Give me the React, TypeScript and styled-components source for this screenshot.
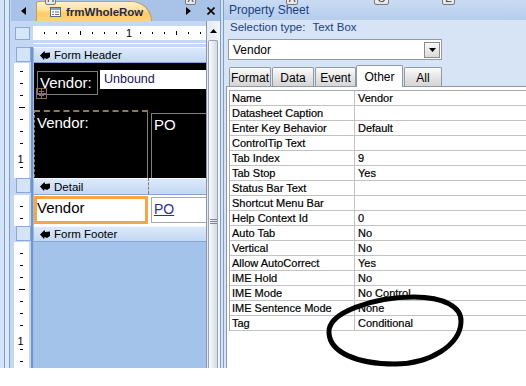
import React from 'react';
import styled, { createGlobalStyle, css } from 'styled-components';

const GlobalStyle = createGlobalStyle`
  html, body { margin: 0; padding: 0; background: #ffffff; }
  body { font-family: "Liberation Sans", Arial, sans-serif; }
  * { box-sizing: border-box; }
`;

const Screen = styled.div`
  position: relative;
  display: flex;
  align-items: flex-start;
  width: 526px;
  height: 386px;
  overflow: hidden;
  background: #ffffff;
`;

/* ---------- form designer ---------- */

const Designer = styled.div`
  display: grid;
  grid-template-columns: 11px 22px 173px 14px;
  grid-template-rows: 21px 26px 16px 115px 17px 31px 16px 1fr;
  flex: none;
  width: 220px;
  height: 368px;
  background: #c4d8f3;
`;

const NavStrip = styled.div`
  grid-column: 1;
  grid-row: 1 / -1;
  background: linear-gradient(
    to right,
    #d3e3f8 0 4px,
    #7d9fd2 4px 5px,
    #dde9fa 5px 9px,
    #7d9fd2 9px 10px,
    #c4d8f3 10px
  );
`;

const TabRow = styled.div`
  grid-column: 2 / 5;
  grid-row: 1;
  display: flex;
  align-items: stretch;
  padding-left: 8px;
  background: #a8c3e7;
`;

const NavButton = styled.div<{ $w: number; $mr?: number }>`
  display: flex;
  align-items: center;
  justify-content: center;
  width: ${p => p.$w}px;
  margin-right: ${p => p.$mr ?? 0}px;
  flex: none;
`;

const DocTab = styled.div`
  display: flex;
  align-items: center;
  gap: 5px;
  width: 116px;
  margin: 1px 0 0 9px;
  padding-left: 13px;
  background: linear-gradient(#fff4cc, #ffe19a 40%, #ffcb66 60%, #ffd47e);
  border: 1px solid #c89c55;
  border-bottom: none;
  border-radius: 3px 22px 0 0 / 3px 21px 0 0;
  font-size: 11.5px;
  font-weight: bold;
  color: #1d2c4a;
`;

const Spacer = styled.div`
  flex: 1;
`;

const CornerCell = styled.div`
  grid-column: 2;
  grid-row: 2;
  padding: 6px 0 0 4px;
`;

const CornerBox = styled.div`
  width: 15px;
  height: 13px;
  background: #d8e6f9;
  border: 1px solid #8aa9d5;
`;

const HRulerCell = styled.div`
  grid-column: 3;
  grid-row: 2;
  padding-top: 5px;
  background: linear-gradient(to bottom, transparent 22px, #ffffff 22px 23px, transparent 23px);
`;

const HRuler = styled.div`
  display: flex;
  height: 14px;
  background: #ffffff;
  overflow: hidden;
`;

const HSlot = styled.div`
  display: flex;
  flex: none;
  justify-content: flex-end;
  align-items: center;
  width: 12px;
`;

const HMark = styled.div<{ $long?: boolean }>`
  width: 1px;
  height: ${p => (p.$long ? 4 : 2)}px;
  background: #000;
`;

const RulerDigit = styled.span<{ $dir: 'h' | 'v' }>`
  font-size: 11px;
  line-height: 10px;
  color: #000;
  ${p => (p.$dir === 'h' ? 'margin-right: -3px;' : 'margin-bottom: -8px; margin-right: 2px;')}
`;

const RulerCol = styled.div<{ $row: number }>`
  grid-column: 2;
  grid-row: ${p => p.$row};
  display: flex;
  padding-left: 3px;
  background: #c4d8f3;
  border-right: 2px solid #6f95cd;
  overflow: hidden;
`;

const VRuler = styled.div`
  width: 15px;
  background: #ffffff;
  overflow: hidden;
`;

const VTrack = styled.div<{ $shift: number }>`
  display: flex;
  flex-direction: column;
  margin-top: ${p => p.$shift}px;
`;

const VSlot = styled.div`
  display: flex;
  flex: none;
  align-items: flex-end;
  justify-content: center;
  height: 12px;
`;

const VMark = styled.div<{ $long?: boolean }>`
  width: ${p => (p.$long ? 6 : 3)}px;
  height: 1px;
  background: #000;
`;

const BandSelector = styled.div`
  width: 15px;
  height: 15px;
  margin-left: 2px;
  background: #d3e3f8;
  border: 1px solid #8aa9d5;
`;

const Band = styled.div<{ $row: number }>`
  grid-column: 3;
  grid-row: ${p => p.$row};
  position: relative;
  display: flex;
  align-items: center;
  gap: 4px;
  padding-left: 6px;
  background: linear-gradient(#dce9fb, #c3d8f4);
  border-left: 1px solid #9dbbe6;
  border-top: 1px solid #f3f8ff;
  border-bottom: 1px solid #86a6d6;
  font-size: 11.5px;
  color: #000;
`;

const SelectionTail = styled.div`
  position: absolute;
  left: 114px;
  top: -1px;
  bottom: 0;
  border-left: 1px dashed #8b7b5c;
`;

const Section = styled.div<{ $row: number; $bg: string }>`
  grid-column: 3;
  grid-row: ${p => p.$row};
  position: relative;
  background: ${p => p.$bg};
  border-left: 1px solid #9dbbe6;
  overflow: hidden;
`;

type Box = { $x: number; $y: number; $w: number; $h: number };

const at = css<Box>`
  position: absolute;
  left: ${p => p.$x}px;
  top: ${p => p.$y}px;
  width: ${p => p.$w}px;
  height: ${p => p.$h}px;
`;

const LabelBox = styled.div<Box & { $dashed?: boolean }>`
  ${at};
  padding: 2px 0 0 2px;
  border: 1px solid #7f7f7f;
  ${p => p.$dashed && 'border-top: 2px dashed #8b7b5c; border-left: 1px dashed #8b7b5c;'}
  color: #ffffff;
  font-size: 15px;
  line-height: 18px;
`;

const UnboundBox = styled.div<Box>`
  ${at};
  padding: 2px 0 0 4px;
  background: #ffffff;
  color: #14145a;
  font-size: 12.5px;
  line-height: 15px;
`;

const MoveHandle = styled.div<Box>`
  ${at};
  display: flex;
  align-items: center;
  justify-content: center;
  border: 1px solid #8c6d3f;
`;

const FieldBox = styled.div<Box & { $selected?: boolean }>`
  ${at};
  background: #ffffff;
  border: ${p => (p.$selected ? '3px solid #f8a63f' : '1px solid #a8a8a8')};
  padding: ${p => (p.$selected ? '0 0 0 0' : '2px 0 0 2px')};
  font-size: 15px;
  line-height: 18px;
  color: #000;
`;

const LinkText = styled.span`
  color: #2f2f9c;
  font-size: 14px;
  text-decoration: underline;
`;

const ScrollCol = styled.div`
  grid-column: 4;
  grid-row: 2 / -1;
  display: flex;
  flex-direction: column;
  padding: 1px 2px 0 1px;
  background: linear-gradient(to right, #e6ebf2, #f3f5f8);
  border-left: 1px solid #8c96a4;
`;

const UpButton = styled.div`
  display: flex;
  align-items: center;
  justify-content: center;
  height: 18px;
`;

const Thumb = styled.div`
  flex: 1;
  display: flex;
  justify-content: center;
  padding-top: 178px;
  border: 1px solid #98a4b6;
  border-bottom: none;
  border-radius: 2px 2px 0 0;
  background: linear-gradient(to right, #fbfcfd, #e2e7ee 60%, #d3dae4);
`;

const Grip = styled.div`
  width: 7px;
  height: 6px;
  background: repeating-linear-gradient(to bottom, #7d8797 0 1px, transparent 1px 2px);
`;

/* ---------- property sheet ---------- */

const Sheet = styled.div`
  position: relative;
  display: flex;
  flex-direction: column;
  flex: none;
  width: 306px;
  height: 368px;
  background: #d6e4f6;
  border-left: 4px double #7c9dd0;
`;

const TitleBar = styled.div`
  display: flex;
  align-items: center;
  height: 20px;
  padding-left: 5px;
  background: linear-gradient(#c9dcf4, #b5ccec);
  color: #1b3f82;
  font-size: 12px;
`;

const SelectionLine = styled.div`
  display: flex;
  align-items: center;
  gap: 7px;
  height: 14px;
  padding-left: 6px;
  color: #1b3f82;
  font-size: 11.5px;
`;

const Combo = styled.div`
  display: flex;
  align-items: center;
  width: 214px;
  height: 21px;
  margin: 5px 0 0 4px;
  padding: 0 1px 0 4px;
  background: #ffffff;
  border: 1px solid #8f9aab;
  font-size: 12px;
  color: #000;
`;

const ComboButton = styled.div`
  display: flex;
  align-items: center;
  justify-content: center;
  width: 16px;
  height: 16px;
  margin-left: auto;
  background: linear-gradient(#f8f8f8, #dadada);
  border: 1px solid #8a8a8a;
`;

const TabStrip = styled.div`
  display: flex;
  align-items: flex-end;
  gap: 1px;
  height: 22px;
  margin-top: 4px;
  padding-left: 5px;
`;

const SheetTab = styled.div<{ $w: number; $active?: boolean }>`
  display: flex;
  align-items: center;
  justify-content: center;
  width: ${p => p.$w}px;
  height: ${p => (p.$active ? 22 : 19)}px;
  padding-top: ${p => (p.$active ? 0 : 2)}px;
  margin-left: ${p => (p.$active ? -1 : 0)}px;
  margin-bottom: ${p => (p.$active ? -1 : 0)}px;
  position: relative;
  background: ${p => (p.$active ? '#ffffff' : 'linear-gradient(#fbfbfb, #e6e6e6 50%, #d5d5d5)')};
  border: 1px solid #8f9aa8;
  border-bottom: none;
  border-radius: 2px 2px 0 0;
  font-size: 12px;
  color: #000;
`;

const Panel = styled.div`
  flex: 1;
  margin-left: 2px;
  padding: 3px 0 0 2px;
  background: #ffffff;
  border-top: 1px solid #8f9aa8;
  border-left: 1px solid #8f9aa8;
`;

const PropTable = styled.div`
  border-top: 1px solid #a9a9a9;
  border-left: 1px solid #a9a9a9;
`;

const PropRow = styled.div`
  display: grid;
  grid-template-columns: 125px 1fr;
  height: 15px;
  border-bottom: 1px solid #c3c3c3;
  font-size: 11px;
  line-height: 14px;
  color: #000;
  -webkit-text-stroke: 0.2px #000;
`;

const PropName = styled.div`
  padding-left: 2px;
  border-right: 1px solid #c3c3c3;
  white-space: nowrap;
  overflow: hidden;
`;

const PropValue = styled.div`
  padding-left: 3px;
  white-space: nowrap;
`;

/* ---------- overlays ---------- */

const KeyTip = styled.div<{ $x: number; $w: number }>`
  position: absolute;
  left: ${p => p.$x}px;
  top: -7px;
  width: ${p => p.$w}px;
  height: 12px;
  background: linear-gradient(#ffffff, #e4e4e4);
  border: 1px solid #7a7a7a;
  border-radius: 0 0 2px 2px;
  font-size: 10px;
  line-height: 10px;
  text-align: center;
  color: #333;
`;

const Scribble = styled.svg`
  position: absolute;
  left: 0;
  top: 0;
  pointer-events: none;
`;

const props: [string, string][] = [
  ['Name', 'Vendor'],
  ['Datasheet Caption', ''],
  ['Enter Key Behavior', 'Default'],
  ['ControlTip Text', ''],
  ['Tab Index', '9'],
  ['Tab Stop', 'Yes'],
  ['Status Bar Text', ''],
  ['Shortcut Menu Bar', ''],
  ['Help Context Id', '0'],
  ['Auto Tab', 'No'],
  ['Vertical', 'No'],
  ['Allow AutoCorrect', 'Yes'],
  ['IME Hold', 'No'],
  ['IME Mode', 'No Control'],
  ['IME Sentence Mode', 'None'],
  ['Tag', 'Conditional'],
];

const tabs = [
  { label: 'Format', w: 42 },
  { label: 'Data', w: 42 },
  { label: 'Event', w: 41 },
  { label: 'Other', w: 47, active: true },
  { label: 'All', w: 38 },
];

const Triangle = ({ dir }: { dir: 'left' | 'right' | 'up' | 'down' }) => {
  const pts = {
    left: '5,0 5,8 0,4',
    right: '0,0 0,8 5,4',
    up: '0,4 7,4 3.5,0',
    down: '0,0 7,0 3.5,4',
  }[dir];
  const w = dir === 'left' || dir === 'right' ? 5 : 7;
  const h = dir === 'left' || dir === 'right' ? 8 : 4;
  return (
    <svg width={w} height={h} viewBox={`0 0 ${w} ${h}`}>
      <polygon points={pts} fill="#000" />
    </svg>
  );
};

const FormIcon = () => (
  <svg width="11" height="10" viewBox="0 0 11 10">
    <rect x="0.5" y="0.5" width="10" height="9" fill="#fff" stroke="#5b6d86" />
    <rect x="1" y="1" width="9" height="2" fill="#8ca2c4" />
    <line x1="2" y1="5" x2="4" y2="5" stroke="#5b6d86" />
    <line x1="5" y1="5" x2="9" y2="5" stroke="#5b6d86" />
    <line x1="2" y1="7.5" x2="4" y2="7.5" stroke="#5b6d86" />
    <line x1="5" y1="7.5" x2="9" y2="7.5" stroke="#5b6d86" />
  </svg>
);

const SectionGlyph = () => (
  <svg width="10" height="9" viewBox="0 0 10 9">
    <path d="M0 4.5 L4.5 0 L5 2 L10 1.5 L10 6 L7 8 L4.5 7 L4 9 Z" fill="#000" />
  </svg>
);

const MoveGlyph = () => (
  <svg width="9" height="9" viewBox="0 0 9 9">
    <path d="M4.5 0 V9 M0 4.5 H9 M2 2.5 H7 M2 6.5 H7" stroke="#8c6d3f" strokeWidth="1" fill="none" />
  </svg>
);

const HorizontalRuler = () => (
  <HRuler>
    {Array.from({ length: 15 }, (_, i) => {
      const n = i + 1;
      return (
        <HSlot key={n}>
          {n % 8 === 0 ? <RulerDigit $dir="h">1</RulerDigit> : <HMark $long={n % 4 === 0} />}
        </HSlot>
      );
    })}
  </HRuler>
);

const VerticalRuler = ({ row, count, shift = 0 }: { row: number; count: number; shift?: number }) => (
  <RulerCol $row={row}>
    <VRuler>
      <VTrack $shift={shift}>
        {Array.from({ length: count }, (_, i) => {
          const n = i + 1;
          return (
            <VSlot key={n}>
              {n % 8 === 0 ? <RulerDigit $dir="v">1</RulerDigit> : <VMark $long={n % 4 === 0} />}
            </VSlot>
          );
        })}
      </VTrack>
    </VRuler>
  </RulerCol>
);

const BandRuler = ({ row }: { row: number }) => (
  <RulerCol $row={row}>
    <BandSelector />
  </RulerCol>
);

export default function App() {
  return (
    <Screen>
      <GlobalStyle />
      <Designer>
        <NavStrip />
        <TabRow>
          <NavButton $w={8}>
            <Triangle dir="left" />
          </NavButton>
          <DocTab>
            <FormIcon />
            frmWholeRow
          </DocTab>
          <Spacer />
          <NavButton $w={13} $mr={9}>
            <Triangle dir="right" />
          </NavButton>
          <NavButton $w={14} $mr={2}>
            <svg width="8" height="8" viewBox="0 0 8 8">
              <path d="M0.5 0.5 L7.5 7.5 M7.5 0.5 L0.5 7.5" stroke="#000" strokeWidth="1.6" />
            </svg>
          </NavButton>
        </TabRow>

        <CornerCell>
          <CornerBox />
        </CornerCell>
        <HRulerCell>
          <HorizontalRuler />
        </HRulerCell>

        <BandRuler row={3} />
        <Band $row={3}>
          <SectionGlyph />
          Form Header
        </Band>

        <VerticalRuler row={4} count={10} shift={-3} />
        <Section $row={4} $bg="#000000">
          <LabelBox $x={3} $y={8} $w={61} $h={24}>
            Vendor:
          </LabelBox>
          <UnboundBox $x={66} $y={7} $w={120} $h={19}>
            Unbound
          </UnboundBox>
          <MoveHandle $x={2} $y={25} $w={11} $h={11}>
            <MoveGlyph />
          </MoveHandle>
          <LabelBox $x={0} $y={47} $w={114} $h={72} $dashed>
            Vendor:
          </LabelBox>
          <LabelBox $x={117} $y={50} $w={70} $h={70}>
            PO
          </LabelBox>
        </Section>

        <BandRuler row={5} />
        <Band $row={5}>
          <SectionGlyph />
          Detail
          <SelectionTail />
        </Band>

        <VerticalRuler row={6} count={3} />
        <Section $row={6} $bg="#ffffff">
          <FieldBox $x={0} $y={1} $w={114} $h={28} $selected>
            Vendor
          </FieldBox>
          <FieldBox $x={117} $y={2} $w={70} $h={26}>
            <LinkText>PO</LinkText>
          </FieldBox>
        </Section>

        <BandRuler row={7} />
        <Band $row={7}>
          <SectionGlyph />
          Form Footer
        </Band>

        <VerticalRuler row={8} count={11} />
        <Section $row={8} $bg="#a4c3ea" />

        <ScrollCol>
          <UpButton>
            <Triangle dir="up" />
          </UpButton>
          <Thumb>
            <Grip />
          </Thumb>
        </ScrollCol>
      </Designer>

      <Sheet>
        <TitleBar>Property Sheet</TitleBar>
        <SelectionLine>
          <span>Selection type:</span>
          <span>Text Box</span>
        </SelectionLine>
        <Combo>
          Vendor
          <ComboButton>
            <Triangle dir="down" />
          </ComboButton>
        </Combo>
        <TabStrip>
          {tabs.map(t => (
            <SheetTab key={t.label} $w={t.w} $active={t.active}>
              {t.label}
            </SheetTab>
          ))}
        </TabStrip>
        <Panel>
          <PropTable>
            {props.map(([name, value]) => (
              <PropRow key={name}>
                <PropName>{name}</PropName>
                <PropValue>{value}</PropValue>
              </PropRow>
            ))}
          </PropTable>
        </Panel>
      </Sheet>

      <KeyTip $x={45} $w={11}>H</KeyTip>
      <KeyTip $x={185} $w={11}>X</KeyTip>
      <KeyTip $x={286} $w={12}>A</KeyTip>
      <KeyTip $x={374} $w={15}>G</KeyTip>
      <KeyTip $x={442} $w={13}>E</KeyTip>

      <Scribble width="526" height="386" viewBox="0 0 526 386">
        <path
          d="M329 333 C327 312, 375 297, 414 297 C444 297, 462 307, 461 322 C460 345, 430 364, 395 364 C356 364, 330 352, 329 333 Z"
          fill="none"
          stroke="#000"
          strokeWidth="5"
        />
      </Scribble>
    </Screen>
  );
}
